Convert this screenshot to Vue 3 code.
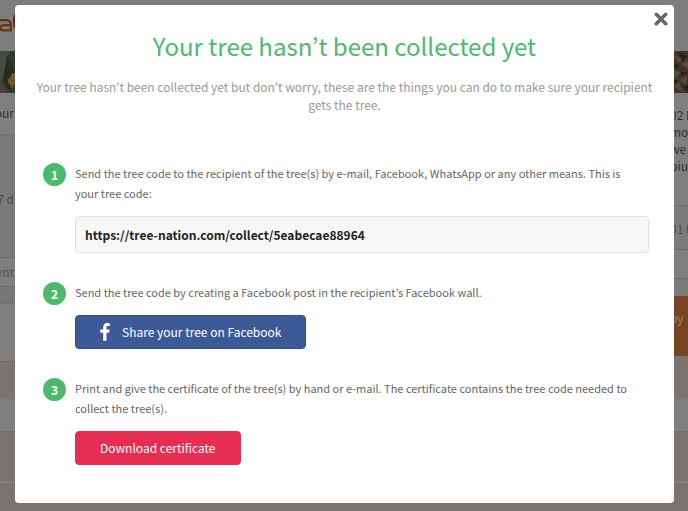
<script setup>
import { ref } from 'vue'

const open = ref(true)
const treeCode = ref('https://tree-nation.com/collect/5eabecae88964')
</script>

<template>
  <div class="screen">
    <div class="page" aria-hidden="true">
      <div class="header">
        <svg class="logo" width="20" height="20" viewBox="0 0 20 20" fill="none" stroke="#d8622a" stroke-width="2.200">
          <path d="M0 6.200H5.500Q10.800 6.200 10.800 10.500V17.500M10.800 11.200H4Q.5 11.200 .5 14T4 16.400H10.800" />
          <path d="M15 1Q13 6 15 14" stroke="#d84a2a" />
        </svg>
      </div>
      <div class="hero">
        <svg class="leaves" width="40" height="42" viewBox="0 0 40 42">
          <rect width="40" height="42" fill="#67705f" />
          <path d="M0 0L9 0L5 24L0 30Z" fill="#8c9880" />
          <path d="M7 4L15 20L11 42L3 28Z" fill="#4d5648" />
          <path d="M0 28L8 42H0Z" fill="#94836f" />
          <circle cx="12" cy="30" r="4" fill="#d5ba2e" />
          <circle cx="14" cy="25" r="3" fill="#ddc64b" />
          <circle cx="12" cy="35" r="2" fill="#c7a929" />
        </svg>
        <svg class="bark" width="20" height="42" viewBox="0 0 20 42">
          <rect width="20" height="42" fill="#806b50" />
          <path d="M5 4L14 7L11 12ZM13 13L20 10V18ZM4 18L13 22L7 27ZM12 29L19 25L18 34ZM5 35L11 31L14 40Z" fill="#ac9777" />
          <path d="M9 1L20 5L15 10ZM5 12L12 15L7 18ZM14 20L20 22L12 25ZM5 28L10 30L7 34ZM14 36L20 34V41Z" fill="#51412f" />
        </svg>
      </div>
      <div class="columns">
        <div class="side side-left">
          <div class="block tab">our</div>
          <div class="block days">7 d</div>
          <div class="block comment">ent</div>
          <div class="block strip"></div>
        </div>
        <div class="side side-right">
          <div class="block notes">
            <span>02 N</span><span>mo</span><span>we p</span><span>pium</span>
          </div>
          <div class="block date">01 l</div>
          <div class="block blank"></div>
          <div class="block gap"></div>
          <div class="block cta">by</div>
          <div class="block sand"></div>
        </div>
      </div>
      <div class="bands">
        <div class="band first"></div>
        <div class="band second"></div>
        <div class="band last"></div>
      </div>
    </div>

    <div v-if="open" class="backdrop">
      <section class="modal" role="dialog" aria-modal="true" aria-labelledby="modal-title">
        <button class="close" type="button" aria-label="Close" @click="open = false">
          <svg width="14" height="14" viewBox="0 0 14 14" fill="none" stroke="#666" stroke-width="3.600" stroke-linecap="round">
            <path d="M2.300 2.300L11.700 11.700M11.700 2.300L2.300 11.700" />
          </svg>
        </button>

        <h1 id="modal-title">Your tree hasn’t been collected yet</h1>
        <p class="intro">Your tree hasn’t been collected yet but don’t worry, these are the things you can do to make sure your recipient gets the tree.</p>

        <ol class="steps">
          <li class="step">
            <span class="number">1</span>
            <div class="body">
              <label class="text" for="tree-code">Send the tree code to the recipient of the tree(s) by e-mail, Facebook, WhatsApp or any other means. This is your tree code:</label>
              <input id="tree-code" class="code" type="text" readonly :value="treeCode" />
            </div>
          </li>
          <li class="step">
            <span class="number">2</span>
            <div class="body">
              <p class="text">Send the tree code by creating a Facebook post in the recipient’s Facebook wall.</p>
              <button class="button facebook" type="button">
                <svg width="10" height="18" viewBox="0 0 10 18" fill="#fff">
                  <path d="M9.700 .2V3.100H8C6.700 3.100 6.500 3.700 6.500 4.600V6.600H9.600L9.200 9.700H6.500V17.700H3.200V9.700H.4V6.600H3.200V4.200C3.200 1.500 4.900 0 7.300 0C8.500 0 9.400 .1 9.700 .2Z" />
                </svg>
                Share your tree on Facebook
              </button>
            </div>
          </li>
          <li class="step">
            <span class="number">3</span>
            <div class="body">
              <p class="text">Print and give the certificate of the tree(s) by hand or e-mail. The certificate contains the tree code needed to collect the tree(s).</p>
              <button class="button download" type="button">Download certificate</button>
            </div>
          </li>
        </ol>
      </section>
    </div>
  </div>
</template>

<style>
body {
  margin: 0;
  background: #797470;
}
</style>

<style scoped>
.screen {
  display: grid;
  min-height: 100vh;
  overflow: hidden;
  font-family: "Noto Sans CJK KR", "Noto Sans", sans-serif;
  font-size: 12px;
  line-height: 20px;
}

.screen * {
  box-sizing: border-box;
}

.page,
.backdrop {
  grid-area: 1 / 1;
}

.page {
  display: flex;
  flex-direction: column;
  background: #fff;
  color: #666;
}

.header {
  height: 51px;
  padding-top: 14px;
  background: #fafafa;
}

.logo,
.leaves,
.bark {
  display: block;
}

.hero {
  display: flex;
  justify-content: space-between;
}

.columns {
  display: flex;
  justify-content: space-between;
  height: 268px;
}

.side-left {
  width: 16px;
}

.side-left .block {
  display: flex;
  justify-content: flex-end;
  padding-right: 2px;
}

.side-right {
  width: 18px;
}

.block {
  overflow: hidden;
  white-space: nowrap;
}

.tab {
  height: 42px;
  padding-top: 10px;
  border-bottom: 1px solid #e2e2e2;
}

.days {
  height: 123px;
  padding-top: 54px;
  border-bottom: 1px solid #d8d8d8;
  background: #f3f3f3;
  color: #999;
}

.comment {
  height: 29px;
  padding-top: 4px;
  border-bottom: 1px solid #d8d8d8;
  color: #aaa;
}

.strip {
  height: 17px;
  border-bottom: 1px solid #ddd;
  background: #eee;
}

.notes {
  display: flex;
  flex-direction: column;
  height: 112px;
  padding-top: 13px;
  line-height: 17px;
}

.date {
  height: 45px;
  padding-top: 13px;
  border-top: 1px solid #ddd;
  border-bottom: 1px solid #ddd;
  background: #f7f7f7;
  color: #999;
}

.blank {
  height: 29px;
  border-bottom: 1px solid #d8d8d8;
}

.gap {
  height: 17px;
  background: #f7f7f7;
}

.cta {
  height: 60px;
  padding-top: 12px;
  background: #ef8a43;
  color: #fff;
}

.sand {
  height: 6px;
  background: #f2e8e0;
}

.bands {
  display: flex;
  flex: 1;
  flex-direction: column;
  gap: 32px;
}

.band {
  border-top: 1px solid #e4dcd6;
  background: #f2e8e0;
}

.first {
  height: 38px;
}

.second {
  height: 50px;
}

.last {
  flex: 1;
  margin-top: -29px;
}

.backdrop {
  display: flex;
  align-items: flex-start;
  padding: 5px 14px 8px 15px;
  background: rgba(0, 0, 0, 0.5);
  z-index: 1;
}

.modal {
  position: relative;
  flex: 1;
  padding: 25px 15px 38px;
  border-radius: 4px;
  background: #fff;
  color: #666;
}

.close {
  position: absolute;
  top: 7px;
  right: 6px;
  display: flex;
  padding: 0;
  border: 0;
  background: none;
  cursor: pointer;
}

h1 {
  margin: 0 0 16px;
  color: #4cba6b;
  font-size: 24px;
  font-weight: 400;
  line-height: 32px;
  text-align: center;
}

p {
  margin: 0;
}

.intro {
  margin-bottom: 49px;
  color: #999;
  line-height: 18px;
  text-align: center;
}

.steps {
  display: flex;
  flex-direction: column;
  gap: 29px;
  margin: 0;
  padding: 0 10px 0 13px;
  font-size: 11px;
  list-style: none;
}

.step {
  display: flex;
  align-items: flex-start;
  gap: 9px;
}

.number {
  flex: none;
  width: 23px;
  height: 23px;
  border-radius: 50%;
  background: #4cba6b;
  color: #fff;
  font-size: 12px;
  font-weight: 700;
  line-height: 24px;
  text-align: center;
}

.body {
  display: flex;
  flex: 1;
  flex-direction: column;
  align-items: flex-start;
  gap: 13px;
}

.text {
  padding-right: 12px;
}

.code {
  width: 100%;
  height: 37px;
  padding: 0 9px;
  border: 1px solid #e2e2e2;
  border-radius: 4px;
  background: #f7f7f7;
  color: #222;
  font: inherit;
  font-size: 12px;
  font-weight: 700;
  outline: 0;
}

.button {
  display: flex;
  align-items: center;
  gap: 12px;
  height: 34px;
  padding: 0 24px;
  border: 1px solid transparent;
  border-radius: 4px;
  color: #fff;
  font: inherit;
  font-size: 12px;
  cursor: pointer;
}

.facebook {
  border-color: #2f4b8a;
  background: #3c5a98;
}

.download {
  border-color: #e72d52;
  background: #e72d52;
}
</style>
